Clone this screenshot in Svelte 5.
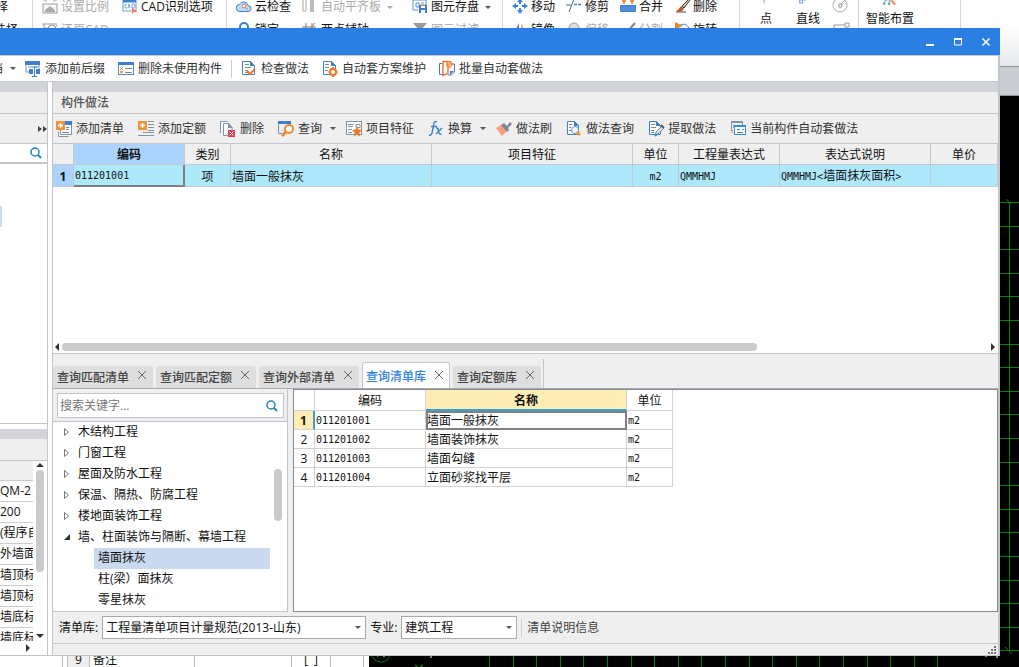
<script>
    const icons = {
        scale: '<path d="M1 1h3M12 1h3M4 -1v4M12 -1v4" stroke="#aaa"/><rect x="1" y="5" width="14" height="9" fill="#f8f8f8" stroke="#999"/><path d="M3 13V11l5-4 5 4v2z" fill="#aaa"/>',
        restore: '<path d="M0 2h15M2 2v12M2 6h6M11 9l4-6" stroke="#999" fill="none"/><circle cx="10" cy="7" r="4" fill="none" stroke="#999"/>',
        cad: '<rect x="1" y="1" width="13" height="11" fill="#fff" stroke="#6a9fdd"/><path d="M1 2h13" stroke="#3d7fd0" stroke-width="3"/><path d="M5 5.500H3v3.500h2M6 9l1-4 1 4M10 5v4h2l1-2-1-2z" fill="none" stroke="#7aa8de"/><path d="M10 8v7l2-2h3z" fill="#f08050"/>',
        cloud: '<path d="M4 12.500h8a3 3 0 0 0 0-6 4.500 4.500 0 0 0-8.500-1A3.500 3.500 0 0 0 4 12.500z" fill="#bcdcf8" stroke="#3d85d0"/><circle cx="8" cy="7" r="2" fill="#fff" stroke="#e07838"/><path d="M9 8l3 3" stroke="#e07838"/>',
        lock: '<path d="M4 7V5a4 4 0 0 1 8 0v2" fill="none" stroke="#3d7fd0" stroke-width="2"/><rect x="3" y="6" width="10" height="8" fill="#3d7fd0"/>',
        align: '<path d="M1 0h3v12H1z" fill="#fff" stroke="#aaa"/><path d="M8 0h4v13H8z" fill="#bbb"/>',
        axis: '<path d="M0 5h14M4 1v13M10 1v13M0 11h14" stroke="#777"/><path d="M6 10l7-9" stroke="#e07020"/>',
        save: '<path d="M1 1h13v5M1 1v10h5M4 4h3v4H4zM9 4h3" fill="none" stroke="#5a90d4"/><path d="M7 6h8v8H7z" fill="#3d7fd0"/><path d="M9 7h4v2H9zM9 11h4v3H9z" fill="#fff"/><path d="M8 6h6" stroke="#f08030"/>',
        filter: '<path d="M1 1h14L9 8v6l-2-2V8z" fill="#999"/>',
        move: '<path d="M8-1l3 4H5zM8 15l3-4H5zM0 7l4-3v6zM16 7l-4-3v6z" fill="#3d85d8"/><path d="M8 2v3M8 9v3M3 7h3M10 7h3" stroke="#3d85d8" stroke-width="2"/>',
        trim: '<path d="M0 6h5M3 13L8 0" stroke="#456a94" fill="none"/><path d="M8 5.500h8" stroke="#3d85d8" stroke-width="1.500" stroke-dasharray="3 1"/>',
        merge: '<path d="M.5 6.500h15v6H.5z" fill="#4d8ddc" stroke="#3d7fd0"/><path d="M2 2h4M10 2h4M4 0v5M12 0v5" stroke="#e88020" stroke-width="1.500"/>',
        brush: '<path d="M15 0L8 7l2 2 6-8z" fill="#e0c8a8" stroke="#333"/><path d="M7 7l3 3c-2 3-5 3-8 2 3-1 3-3 5-5z" fill="#c05818"/><path d="M2 13h10" stroke="#444"/>',
        mirror: '<path d="M7 1v12H1z" fill="#3d7fd0"/><path d="M9 1v12h6z" fill="#f0b040"/>',
        offset: '<circle cx="8" cy="6" r="5" fill="#ddd" stroke="#999"/><path d="M5 7v7h6V7" fill="#fff" stroke="#999"/>',
        split: '<path d="M1 7h6M15 1L8 9 6 7" stroke="#888" stroke-width="2" fill="none"/>',
        rotate: '<path d="M4 11a6 6 0 1 1 9 2" fill="none" stroke="#3d7fd0"/><path d="M1 0l8 4-8 3z" fill="#e88828"/>',
        prefix: '<path d="M0 0h15v4H0z" fill="#3d7fd0"/><path d="M1 4v7h3M14 4v7h-3M3 6h4M9 6h4" fill="none" stroke="#8294a5"/><path d="M4 8h4v5H4zM11 8h4v5h-4z" fill="#3d7fd0"/><path d="M9.500 6v9M7 6h5M7 15.500h5" stroke="#3d7fd0"/>',
        unused: '<rect x=".5" y="1.500" width="15" height="12" fill="#fff" stroke="#5b88bb"/><path d="M0 1h16v3H0z" fill="#3d7fd0"/><path d="M2 6l3 3M5 6l-3 3M2 10l3 2M5 10l-3 2" stroke="#f08828"/><path d="M7 7.500h7M7 11.500h7" stroke="#778899"/>',
        check: '<path d="M1.500.5h8l4 4v9h-12z" fill="#fff" stroke="#3d7fd0"/><path d="M9 0v5h5z" fill="#3d7fd0"/><path d="M4 3.500h4M4 6.500h6M4 9.500h3M4 11.500h3" stroke="#778899"/><path d="M6 10l3 3 5-5" fill="none" stroke="#f07828" stroke-width="2"/>',
        scheme: '<path d="M1.500.5h8l4 4v9h-12z" fill="#fff" stroke="#3d7fd0"/><path d="M9 0v5h5z" fill="#3d7fd0"/><path d="M3 3.500h4M3 6.500h4M3 9.500h3" stroke="#778899"/><circle cx="11" cy="11" r="3" fill="#fff" stroke="#f07828" stroke-width="2"/><path d="M11 6v2M11 14v2M6.500 11h1M14.500 11h1M8 8l1 1M13 13l1 1M14 8l-1 1M8 14l1-1" stroke="#f07828" stroke-width="2"/>',
        batch: '<path d="M3 2.500H.5v11H4M11 3h4.500v8l-3 3H9" fill="#fff" stroke="#3d7fd0"/><path d="M15 10l-4 4v-4z" fill="#3d7fd0"/><path d="M4 .5h5v12l-5 2z" fill="#fff" stroke="#f07828" stroke-width="1.500"/><path d="M8 .5h4V3h2l-3.500 4L7 4h2V3H8z" fill="#f9b27c" stroke="#f07828"/>',
        addlist: '<path d="M4.500 1.500h11v12h-11zM2.500 11v4.500h10" fill="#fff" stroke="#8294a5"/><path d="M9 0h7v4H9z" fill="#3d7fd0"/><path d="M10 6.500h3M10 8.500h3M6 11.500h7" stroke="#778899"/><path d="M0 0h9v9H0z" fill="#f0923c"/><path d="M4.500 2v5M2 4.500h5" stroke="#fff" stroke-width="1.500"/>',
        addquota: '<path d="M10 .5h6M10 3.500h6M10 6.500h6M10 9.500h6M5 11.500h11M0 14.500h16" stroke="#8294a5"/><path d="M0 0h9v9H0z" fill="#f0923c"/><path d="M4.500 2v5M2 4.500h5" stroke="#fff" stroke-width="1.500"/>',
        remove: '<path d="M.5 12V.5h7M3.500 14.500v-12H9l3 4v8z" fill="#fff" stroke="#8294a5"/><path d="M8 2v5h5z" fill="#8294a5"/><path d="M8 9h7v7H8z" fill="#d8404c"/><path d="M9.500 10.500l4 4M13.500 10.500l-4 4" stroke="#fff"/>',
        query: '<path d="M.5 1v11.500H4M12.500 2v2" fill="none" stroke="#8294a5"/><path d="M0 0h13v3H0z" fill="#3d7fd0"/><circle cx="11" cy="8" r="4" fill="#fff" stroke="#f08838" stroke-width="2"/><path d="M8 11l-4 4" stroke="#f08838" stroke-width="3"/>',
        feature: '<rect x=".5" y=".5" width="15" height="13" fill="#fff" stroke="#8294a5"/><path d="M2 3.500h6M2 5.500h5M2 8.500h4M2 11.500h4M10 3.500h4v3h-4z" stroke="#8294a5" fill="none"/><path d="M11 5l1.500 3.500 3.500.5-2.500 2.500.7 4L11 13.500l-3.200 2 .7-4L6 9l3.500-.5z" fill="#f07828"/>',
        fx: '<path d="M9 1Q6-1 5.500 5L4 12Q3 15 1 14M3 5.500h6" fill="none" stroke="#3d85d0" stroke-width="1.500"/><path d="M8 7q2-1 2.500 3t3 3M14 7l-6 6" fill="none" stroke="#3d85d0" stroke-width="1.500"/>',
        paint: '<path d="M5 4l6 6-5 5-6-8z" fill="#f7a07a"/><path d="M5 4l3-2 3 3 3-4 2 2-4 4 1 2-2 2z" fill="#778899"/>',
        docquery: '<path d="M1.500.5h7l4 4v9h-11z" fill="#fff" stroke="#3d7fd0"/><path d="M8 0v5h5z" fill="#3d7fd0"/><path d="M3 3.500h3M3 6.500h2M3 9.500h2" stroke="#778899"/><circle cx="9" cy="9" r="3.500" fill="#fff" stroke="#5c94d4"/><path d="M12 10l3 3-2 2-3-3z" fill="#f89820"/>',
        extract: '<path d="M1.500.5h7l4 4v9h-11z" fill="#fff" stroke="#3d7fd0"/><path d="M8 0v5h5z" fill="#3d7fd0"/><path d="M3 3.500h4M3 6.500h5M3 9.500h3M3 11.500h3" stroke="#778899"/><path d="M14 5l-6 6-1 3 3-1 6-6z" fill="#dde" stroke="#7a8a98"/><path d="M13 4l3 3" stroke="#54606c" stroke-width="2"/><path d="M7 15l2-2" stroke="#12a0c8" stroke-width="2"/>',
        current: '<path d="M3 9.500H1.500v-8h11V4M3 4.500h2M3 6.500h2" fill="none" stroke="#8294a5"/><path d="M1 1h12" stroke="#8294a5" stroke-width="2"/><rect x="4.500" y="5.500" width="11" height="8" fill="#fff" stroke="#3d85d0"/><path d="M4 5h12" stroke="#3d85d0" stroke-width="2"/><path d="M7 8.500h3M7 11.500h6M12 8.500h2" stroke="#3d85d0"/><path d="M1 9l2 3" stroke="#f08838"/>',
        search: '<circle cx="7" cy="7" r="4" fill="none" stroke="#2385bd" stroke-width="1.500"/><path d="M10 10l3 3" stroke="#2385bd" stroke-width="2"/>',
        point: '<path d="M5.500 0v4" stroke="#667788"/>',
        line: '<path d="M6-1L3 1" stroke="#667788"/><rect x="-3" y="0" width="4" height="4" fill="#fff" stroke="#3d85d0"/>',
        smart: '<path d="M0 6l2-7M7 6V0M1 0h4" stroke="#3d85d0" fill="none"/><path d="M-1 4h2v2h-2zM6 4h2v2H6z" fill="#fff" stroke="#3d85d0"/><path d="M7-2l8 8" stroke="#f09060" stroke-width="3"/>'
    };

    const ribbonGroups = [
        {
            name: 'scale',
            items: [
                ['scale', '设置比例', true], ['cad', 'CAD识别选项'],
                ['restore', '还原CAD', true]
            ]
        },
        {
            name: 'check',
            items: [
                ['cloud', '云检查'], ['align', '自动平齐板', true, true], ['save', '图元存盘', false, true],
                ['lock', '锁定'], ['axis', '两点辅轴'], ['filter', '图元过滤', true]
            ]
        },
        {
            name: 'modify',
            items: [
                ['move', '移动'], ['trim', '修剪'], ['merge', '合并'], ['brush', '删除'],
                ['mirror', '镜像'], ['offset', '偏移', true], ['split', '分割', true], ['rotate', '旋转']
            ]
        }
    ];

    const methodTools = [
        ['addlist', '添加清单'],
        ['addquota', '添加定额'],
        ['remove', '删除'],
        ['query', '查询', true],
        ['feature', '项目特征'],
        ['fx', '换算', true],
        ['paint', '做法刷'],
        ['docquery', '做法查询'],
        ['extract', '提取做法'],
        ['current', '当前构件自动套做法']
    ];

    const properties = ['QM-2', '200', '(程序自', '外墙面', '墙顶标', '墙顶标', '墙底标', '墙底标'];
    const tabs = ['查询匹配清单', '查询匹配定额', '查询外部清单', '查询清单库', '查询定额库'];
    const chapters = ['木结构工程', '门窗工程', '屋面及防水工程', '保温、隔热、防腐工程', '楼地面装饰工程'];
    const sections = ['墙面抹灰', '柱(梁）面抹灰', '零星抹灰'];
    const results = [
        ['011201001', '墙面一般抹灰'],
        ['011201002', '墙面装饰抹灰'],
        ['011201003', '墙面勾缝'],
        ['011201004', '立面砂浆找平层']
    ];

    // drawing grid, one line every 23.6 units
    const gridRows = Array.from({ length: 20 }, (_, i) => Math.round(106 + i * 23.6));
    const gridCols = Array.from({ length: 20 }, (_, i) => Math.round(120 + i * 23.6));

    let activeTab = '查询清单库';
    let activeSection = '墙面抹灰';
    let activeRow = 0;
    let keyword = '';
</script>

{#snippet icon(name)}
    <svg class="icon" viewBox="0 0 16 16" aria-hidden="true">{@html icons[name]}</svg>
{/snippet}

<div class="screen">
    <header class="ribbon">
        <div class="group picks">
            <button class="tool">选择</button>
            <button class="tool">批量选择</button>
        </div>
        {#each ribbonGroups as group}
            <div class="group {group.name}">
                {#each group.items as [id, label, disabled, menu]}
                    <button class="tool" {disabled}>
                        {@render icon(id)}{label}
                        {#if menu}<i class="caret"></i>{/if}
                    </button>
                {/each}
            </div>
        {/each}
        <div class="group draw">
            <button class="big">{@render icon('point')}点</button>
            <button class="big">{@render icon('line')}直线</button>
            <svg class="shapes" viewBox="0 0 18 40" aria-hidden="true">
                <circle cx="8" cy="5" r="7" fill="none" stroke="#aaa" />
                <path d="M8 5l5-5M2 25h13v9H2z" fill="none" stroke="#999" />
                <path d="M7 4h3v3H7zM13 23h4v4h-4z" fill="#fff" stroke="#999" />
            </svg>
        </div>
        <div class="group smart">
            <button class="big">{@render icon('smart')}智能布置</button>
        </div>
    </header>
    <div class="strip"></div>

    <div class="workspace">
        <div class="sheet">
            <div class="sheet-row">
                <span class="no">9</span>
                <span class="remark">备注</span>
                <span class="blank"></span>
                <span class="mark">[&nbsp; ]</span>
                <span class="tail"></span>
            </div>
        </div>
        <svg class="canvas" aria-hidden="true">
            <g stroke="#008000" shape-rendering="crispEdges">
                {#each gridRows as y}
                    <line x1="600" x2="100%" y1={y + 0.5} y2={y + 0.5} />
                {/each}
                {#each gridCols as x}
                    <line x1={x + 0.5} x2={x + 0.5} y1="540" y2="100%" />
                {/each}
                <line x1="640.5" x2="640.5" y1="106" y2="555" />
                <path d="M637 103l5 5M636 551l7 7" />
            </g>
            <circle cx="12" cy="556" r="10" fill="none" stroke="#008000" />
            <path d="M46 569l4 3 4-3" fill="none" stroke="#00e000" />
            <path d="M8 560h1M14 560h2M62 560v2M616 560h2M628 560v2" stroke="#fff" />
        </svg>
    </div>

    <main class="dialog">
        <div class="titlebar">
            <button aria-label="最小化"><svg viewBox="0 0 10 10"><path d="M1 8h8" stroke="#fff" stroke-width="2" /></svg></button>
            <button aria-label="最大化"><svg viewBox="0 0 10 10"><path d="M1.500 2v6h7V2M1 2h8" fill="none" stroke="#fff" /><path d="M1 2h8" stroke="#fff" stroke-width="2" /></svg></button>
            <button aria-label="关闭"><svg viewBox="0 0 10 10"><path d="M1.500 1.500l7 7M8.500 1.500l-7 7" stroke="#fff" stroke-width="1.500" /></svg></button>
        </div>

        <nav class="toolbar main-tools">
            <button class="tool cut"><span>存档</span><i class="caret"></i></button>
            <button class="tool">{@render icon('prefix')}添加前后缀</button>
            <button class="tool">{@render icon('unused')}删除未使用构件</button>
            <i class="divider"></i>
            <button class="tool">{@render icon('check')}检查做法</button>
            <button class="tool">{@render icon('scheme')}自动套方案维护</button>
            <button class="tool">{@render icon('batch')}批量自动套做法</button>
        </nav>

        <div class="columns">
            <aside>
                <div class="band"></div>
                <div class="caption"></div>
                <div class="more">
                    <svg viewBox="0 0 9 6"><path d="M0 0l4 3-4 3zM5 0l4 3-4 3z" fill="#444" /></svg>
                </div>
                <div class="find">{@render icon('search')}</div>
                <div class="list"><i></i></div>
                <div class="band"></div>
                <div class="caption"></div>
                <div class="props">
                    <div class="values">
                        <div class="values-head"></div>
                        {#each properties as value}
                            <div class="value">{value}</div>
                        {/each}
                    </div>
                    <div class="vscroll">
                        <i class="up"></i>
                        <i class="thumb"></i>
                        <i class="down"></i>
                    </div>
                </div>
                <div class="side-end"><i class="right"></i></div>
            </aside>

            <section class="work">
                <div class="band"></div>
                <h2>构件做法</h2>
                <div class="toolbar">
                    {#each methodTools as [id, label, menu]}
                        <button class="tool">
                            {@render icon(id)}{label}
                            {#if menu}<i class="caret"></i>{/if}
                        </button>
                    {/each}
                </div>

                <div class="methods">
                    <table>
                        <colgroup>
                            <col class="w21"><col class="w111"><col class="w46"><col class="w201"><col class="w201">
                            <col class="w46"><col class="w101"><col class="w151"><col>
                        </colgroup>
                        <thead>
                            <tr>
                                <th></th>
                                <th class="current">编码</th>
                                <th>类别</th>
                                <th>名称</th>
                                <th>项目特征</th>
                                <th>单位</th>
                                <th>工程量表达式</th>
                                <th>表达式说明</th>
                                <th>单价</th>
                            </tr>
                        </thead>
                        <tbody>
                            <tr>
                                <th class="current">1</th>
                                <td class="cell code">011201001</td>
                                <td class="center">项</td>
                                <td>墙面一般抹灰</td>
                                <td></td>
                                <td class="center code">m2</td>
                                <td class="code">QMMHMJ</td>
                                <td><span class="code">QMMHMJ&lt;</span>墙面抹灰面积<span class="code">&gt;</span></td>
                                <td></td>
                            </tr>
                        </tbody>
                    </table>
                </div>
                <div class="hscroll">
                    <i class="left"></i>
                    <div class="track"><i></i></div>
                    <i class="right"></i>
                </div>

                <div class="tabs">
                    <div class="tablist">
                        {#each tabs as tab}
                            <div class="tab" class:active={tab === activeTab}>
                                <button on:click={() => (activeTab = tab)}>{tab}</button>
                                <button class="close" aria-label="关闭{tab}">
                                    <svg viewBox="0 0 8 8"><path d="M0 0l8 8M8 0L0 8" stroke="#666" /></svg>
                                </button>
                            </div>
                        {/each}
                    </div>
                </div>

                <div class="lookup">
                    <div class="browser">
                        <div class="searchbar">
                            <label>
                                <input type="text" placeholder="搜索关键字..." aria-label="搜索关键字" bind:value={keyword}>
                                {@render icon('search')}
                            </label>
                        </div>
                        <div class="tree">
                            <ul>
                                {#each chapters as chapter}
                                    <li>
                                        <svg viewBox="0 0 8 8"><path d="M1.500.5l4 3.500-4 3.500z" fill="#fff" stroke="#777" /></svg>{chapter}
                                    </li>
                                {/each}
                                <li><svg viewBox="0 0 8 8"><path d="M7 1v6H1z" fill="#333" /></svg>墙、柱面装饰与隔断、幕墙工程</li>
                                {#each sections as section}
                                    <li class="leaf">
                                        <button class:picked={section === activeSection} on:click={() => (activeSection = section)}>{section}</button>
                                    </li>
                                {/each}
                            </ul>
                            <i class="thumb"></i>
                        </div>
                    </div>

                    <div class="results">
                        <table>
                            <thead>
                                <tr>
                                    <th class="w21"></th>
                                    <th class="w111">编码</th>
                                    <th class="w201 current">名称</th>
                                    <th class="w46">单位</th>
                                </tr>
                            </thead>
                            <tbody>
                                {#each results as [code, name], index}
                                    <tr class:selected={index === activeRow} on:click={() => (activeRow = index)}>
                                        <th>{index + 1}</th>
                                        <td class="code">{code}</td>
                                        <td class="name">{name}</td>
                                        <td class="code">m2</td>
                                    </tr>
                                {/each}
                            </tbody>
                        </table>
                    </div>
                </div>

                <div class="options">
                    <label for="library">清单库:</label>
                    <div class="select library">
                        <select id="library"><option>工程量清单项目计量规范(2013-山东)</option></select>
                        <i class="caret"></i>
                    </div>
                    <label for="major">专业:</label>
                    <div class="select major">
                        <select id="major"><option>建筑工程</option></select>
                        <i class="caret"></i>
                    </div>
                    <i class="divider"></i>
                    <button class="info">清单说明信息</button>
                </div>
                <div class="status">
                    <svg viewBox="0 0 8 8"><path d="M6 0h2v2H6zM3 3h2v2H3zM6 3h2v2H6zM0 6h2v2H0zM3 6h2v2H3zM6 6h2v2H6z" fill="#777" /></svg>
                </div>
            </section>
        </div>
    </main>
</div>

<style>
    :global(body) {
        margin: 0;
    }

    .screen {
        --ui: "Open Sans", "Noto Sans CJK SC", sans-serif;
        --grid: "DejaVu Sans Mono", "Noto Sans CJK SC", monospace;
        --line: #c2c5cc;
        position: relative;
        display: flex;
        flex-direction: column;
        height: 100vh;
        overflow: hidden;
        font: 12px/14px var(--ui);
        color: #111;
        background: #fff;
    }

    .screen * {
        box-sizing: border-box;
    }

    button {
        padding: 0;
        border: 0;
        background: none;
        font: inherit;
        color: inherit;
        white-space: nowrap;
        cursor: pointer;
    }

    button:disabled {
        color: #aaa;
    }

    .icon {
        flex: none;
        width: 16px;
        height: 16px;
        overflow: visible;
    }

    .tool {
        display: flex;
        align-items: center;
        gap: 4px;
    }

    .caret {
        flex: none;
        border: 3px solid transparent;
        border-top-color: #555;
        border-bottom: 0;
    }

    .tool .caret {
        margin: 0 -4px 0 4px;
    }

    button:disabled .caret {
        border-top-color: #aaa;
    }

    /* ribbon of the main application */
    .ribbon {
        display: flex;
        flex: none;
        height: 67px;
        background: linear-gradient(#fff 40%, #e6e8ea);
        border-bottom: 1px solid #909498;
    }

    .group {
        display: grid;
        flex: none;
        grid-auto-rows: 14px;
        row-gap: 9px;
        border-right: 1px solid #d4d6d9;
    }

    .group .tool {
        gap: 3px;
    }

    .group .tool .caret {
        margin-left: 3px;
    }

    .picks {
        width: 33px;
        justify-items: start;
    }

    .picks .tool {
        justify-content: flex-end;
        width: 8px;
    }

    .picks .tool + .tool {
        width: 18px;
    }

    .scale {
        grid-template-columns: 80px 1fr;
        width: 194px;
        padding-left: 9px;
    }

    .check {
        grid-template-columns: 66px 110px 1fr;
        width: 276px;
        padding-left: 9px;
    }

    .modify {
        grid-template-columns: 54px 54px 54px 1fr;
        width: 237px;
        padding-left: 9px;
    }

    .draw {
        grid-template-columns: 36px 48px 1fr;
        width: 119px;
        padding-left: 8px;
    }

    .smart {
        width: 102px;
        justify-items: start;
        padding-left: 7px;
    }

    .big {
        display: flex;
        flex-direction: column;
        align-items: center;
        height: 28px;
        line-height: 14px;
    }

    .big .icon {
        height: 12px;
    }

    .shapes {
        width: 18px;
        height: 40px;
    }

    .strip {
        flex: none;
        height: 29px;
        background: #c9ccd1;
        border-bottom: 1px solid #909498;
    }

    .workspace {
        display: flex;
        flex: 1;
        min-height: 0;
        background: #000;
    }

    .sheet {
        display: flex;
        flex: none;
        flex-direction: column;
        justify-content: flex-end;
        width: 369px;
        background: #fff;
    }

    .sheet-row {
        display: flex;
        height: 14px;
        margin-left: 62px;
        border-left: 1px solid #bbb;
        padding-left: 4px;
    }

    .sheet-row span {
        border-left: 1px solid #bbb;
        line-height: 14px;
    }

    .sheet-row .no {
        width: 22px;
        background: #eee;
        text-align: center;
    }

    .remark {
        width: 105px;
        padding-left: 3px;
    }

    .blank {
        width: 97px;
    }

    .mark {
        width: 39px;
        text-align: center;
    }

    .tail {
        width: 34px;
        border-right: 1px solid #bbb;
    }

    .canvas {
        flex: 1;
        height: 100%;
        min-width: 0;
    }

    /* floating window over the application */
    .dialog {
        position: absolute;
        inset: 28px 19px 11px 0;
        display: flex;
        flex-direction: column;
        border-right: 2px solid var(--line);
        border-bottom: 1px solid #bcc4cc;
        background: #fff;
    }

    .titlebar {
        display: flex;
        flex: none;
        align-items: center;
        justify-content: flex-end;
        gap: 18px;
        height: 27px;
        margin-right: -2px;
        padding-right: 9px;
        background: #2c7fe2;
    }

    .titlebar svg {
        display: block;
        width: 10px;
        height: 10px;
    }

    .toolbar {
        display: flex;
        flex: none;
        align-items: center;
        gap: 14px;
        height: 30px;
        padding-left: 3px;
        border-bottom: 1px solid var(--line);
        color: #333;
    }

    .main-tools {
        gap: 13px;
        height: 27px;
        padding-left: 0;
        border-top: 1px solid var(--line);
    }

    .cut span {
        display: flex;
        justify-content: flex-end;
        width: 3px;
        overflow: hidden;
    }

    .cut .caret {
        margin: 0 -4px 0 3px;
    }

    .divider {
        width: 1px;
        height: 18px;
        background: #ccc;
    }

    .main-tools .divider {
        margin: 0 -4px;
    }

    .columns {
        display: flex;
        flex: 1;
        min-height: 0;
        gap: 4px;
    }

    .band {
        flex: none;
        height: 10px;
        background: #d3d4da;
    }

    aside {
        display: flex;
        flex: none;
        flex-direction: column;
        width: 48px;
        border-right: 1px solid var(--line);
    }

    .caption,
    h2 {
        flex: none;
        height: 22px;
        background: #efefef;
        border-bottom: 1px solid var(--line);
    }

    .more {
        display: flex;
        flex: none;
        align-items: center;
        justify-content: flex-end;
        height: 30px;
        background: #efefef;
        border-bottom: 1px solid var(--line);
    }

    .more svg {
        width: 9px;
        height: 6px;
    }

    .find {
        display: flex;
        flex: none;
        align-items: center;
        justify-content: flex-end;
        height: 20px;
        padding-right: 3px;
        border-bottom: 2px solid var(--line);
    }

    .list {
        flex: 1;
        min-height: 0;
        margin-bottom: 5px;
        padding-top: 42px;
        border-bottom: 1px solid var(--line);
    }

    .list i {
        display: block;
        width: 2px;
        height: 21px;
        background: #c9daf2;
    }

    .props {
        display: flex;
        flex: none;
        height: 180px;
        overflow: hidden;
    }

    .values {
        width: 33px;
    }

    .values-head {
        height: 20px;
        background: #efefef;
        border-bottom: 1px solid #ccc;
    }

    .value {
        height: 21px;
        overflow: hidden;
        border-bottom: 1px solid #ccc;
        line-height: 20px;
        white-space: nowrap;
    }

    .vscroll {
        display: flex;
        flex: 1;
        flex-direction: column;
        align-items: center;
        gap: 3px;
        padding: 2px 0 3px;
    }

    .vscroll .thumb {
        width: 8px;
        height: 102px;
        margin-bottom: auto;
    }

    .thumb,
    .track i {
        border-radius: 4px;
        background: #cacaca;
    }

    .up,
    .down,
    .left,
    .right {
        flex: none;
        border: 4px solid transparent;
    }

    .up {
        border-top: 0;
        border-bottom-color: #333;
    }

    .down {
        border-bottom: 0;
        border-top-color: #333;
    }

    .left {
        border-left: 0;
        border-right-color: #333;
    }

    .right {
        border-right: 0;
        border-left-color: #333;
    }

    .side-end {
        display: flex;
        flex: none;
        align-items: center;
        height: 14px;
        padding-left: 26px;
    }

    .work {
        display: flex;
        flex: 1;
        flex-direction: column;
        min-width: 0;
        border-left: 1px solid var(--line);
        background: #efefef;
    }

    h2 {
        margin: 0;
        padding-left: 8px;
        font-size: 12px;
        font-weight: 500;
        line-height: 21px;
        color: #555;
    }

    table {
        border-spacing: 0;
        table-layout: fixed;
    }

    th,
    td {
        padding: 0;
        border: 0 solid #c4c7cd;
        border-width: 0 1px 1px 0;
        overflow: hidden;
        white-space: nowrap;
        font-weight: 400;
    }

    td {
        text-align: left;
    }

    .code {
        font-family: var(--grid);
        font-size: 10px;
    }

    .w21 {
        width: 21px;
    }

    .w46 {
        width: 46px;
    }

    .w101 {
        width: 101px;
    }

    .w111 {
        width: 111px;
    }

    .w151 {
        width: 151px;
    }

    .w201 {
        width: 201px;
    }

    .methods {
        flex: 1;
        min-height: 0;
        overflow: hidden;
        background: #fff;
    }

    .methods table {
        width: 100%;
    }

    .methods th {
        height: 21px;
        padding-top: 2px;
        background: #efefef;
    }

    .methods td,
    .methods tbody th {
        height: 22px;
        background: #aee9fb;
    }

    .methods td {
        padding: 2px 1px 0;
    }

    .methods .center {
        text-align: center;
    }

    .methods .current,
    .methods tbody .current {
        background: #aad4ff;
        font-weight: 700;
    }

    .methods .cell {
        border-right: 2px solid #808080;
        border-bottom: 2px solid #808080;
    }

    .hscroll {
        display: flex;
        flex: none;
        align-items: center;
        gap: 3px;
        height: 14px;
        padding: 0 3px 0 2px;
        border-bottom: 1px solid var(--line);
        background: #fff;
    }

    .track {
        flex: 1;
    }

    .track i {
        display: block;
        width: 75%;
        height: 8px;
    }

    .tabs {
        display: flex;
        flex: none;
        height: 35px;
        padding-top: 5px;
        border-bottom: 1px solid #a8adb5;
    }

    .tablist {
        display: flex;
        align-items: flex-end;
        gap: 3px;
        padding-right: 2px;
        border-right: 1px solid var(--line);
    }

    .tab {
        display: flex;
        align-items: center;
        gap: 9px;
        height: 22px;
        padding: 2px 7px 0 4px;
        border-radius: 3px 3px 0 0;
        background: #dedede;
        color: #444;
        font-weight: 500;
    }

    .tab.active {
        height: 26px;
        padding: 2px 6px 0 3px;
        border: 1px solid var(--line);
        border-bottom: 0;
        background: #fff;
        color: #2c7fe2;
    }

    .close {
        align-self: flex-start;
        padding-top: 3px;
    }

    .active .close {
        padding-top: 6px;
    }

    .close svg {
        display: block;
        width: 8px;
        height: 8px;
    }

    .lookup {
        display: flex;
        flex: none;
        gap: 5px;
    }

    .browser {
        flex: none;
        width: 235px;
        border-right: 1px solid var(--line);
    }

    .searchbar {
        height: 33px;
        padding: 4px 3px 4px 4px;
        border-bottom: 1px solid var(--line);
    }

    .searchbar label {
        display: flex;
        align-items: center;
        height: 25px;
        padding-right: 3px;
        border: 1px solid var(--line);
        background: #fff;
    }

    input {
        flex: 1;
        min-width: 0;
        padding: 0 2px;
        border: 0;
        outline: 0;
        background: none;
        font: inherit;
        color: #333;
    }

    input::placeholder {
        color: #777;
    }

    .tree {
        display: flex;
        align-items: flex-start;
        border-bottom: 1px solid var(--line);
        background: #fff;
    }

    ul {
        flex: 1;
        margin: 0;
        padding: 0 4px 0 10px;
        list-style: none;
    }

    li {
        display: flex;
        align-items: center;
        gap: 7px;
        height: 21px;
        padding-bottom: 2px;
        white-space: nowrap;
    }

    li svg {
        width: 8px;
        height: 8px;
    }

    .leaf {
        padding: 0 0 0 31px;
    }

    .leaf button {
        width: 100%;
        height: 21px;
        padding: 0 0 2px 4px;
        text-align: left;
    }

    .leaf .picked {
        background: #c9daf0;
    }

    .tree .thumb {
        width: 8px;
        height: 52px;
        margin: 47px 5px 0 0;
    }

    .results {
        flex: 1;
        min-width: 0;
        border: 1px solid #858a92;
        background: #fff;
    }

    .results table {
        width: 379px;
    }

    .results th,
    .results td {
        height: 19px;
        padding-top: 2px;
        border-color: #d3d3d3;
    }

    .results thead th {
        height: 21px;
    }

    .results td {
        padding-left: 1px;
    }

    .results thead .current {
        border-bottom: 2px solid #36a3cd;
        background: #ffedb4;
        font-weight: 700;
    }

    .selected th {
        border-right: 2px solid #36a3cd;
        background: #ffedb4;
        font-weight: 700;
    }

    .selected .name {
        outline: 2px solid #808080;
        outline-offset: -2px;
    }

    .options {
        display: flex;
        flex: none;
        align-items: center;
        height: 32px;
        padding-left: 6px;
        border-bottom: 1px solid #c8c8c8;
    }

    .select {
        display: flex;
        align-items: center;
        height: 23px;
        margin: 0 4px;
        padding-right: 4px;
        border: 1px solid #aaa;
        background: #fff;
    }

    .library {
        width: 264px;
    }

    .major {
        width: 116px;
    }

    select {
        flex: 1;
        min-width: 0;
        height: 21px;
        padding: 0 0 0 3px;
        border: 0;
        outline: 0;
        appearance: none;
        background: none;
        font: inherit;
        color: #111;
    }

    .info {
        margin-left: 5px;
        color: #444;
    }

    .status {
        display: flex;
        flex: none;
        align-items: center;
        justify-content: flex-end;
        height: 11px;
        padding-right: 2px;
    }

    .status svg {
        width: 8px;
        height: 8px;
    }
</style>
